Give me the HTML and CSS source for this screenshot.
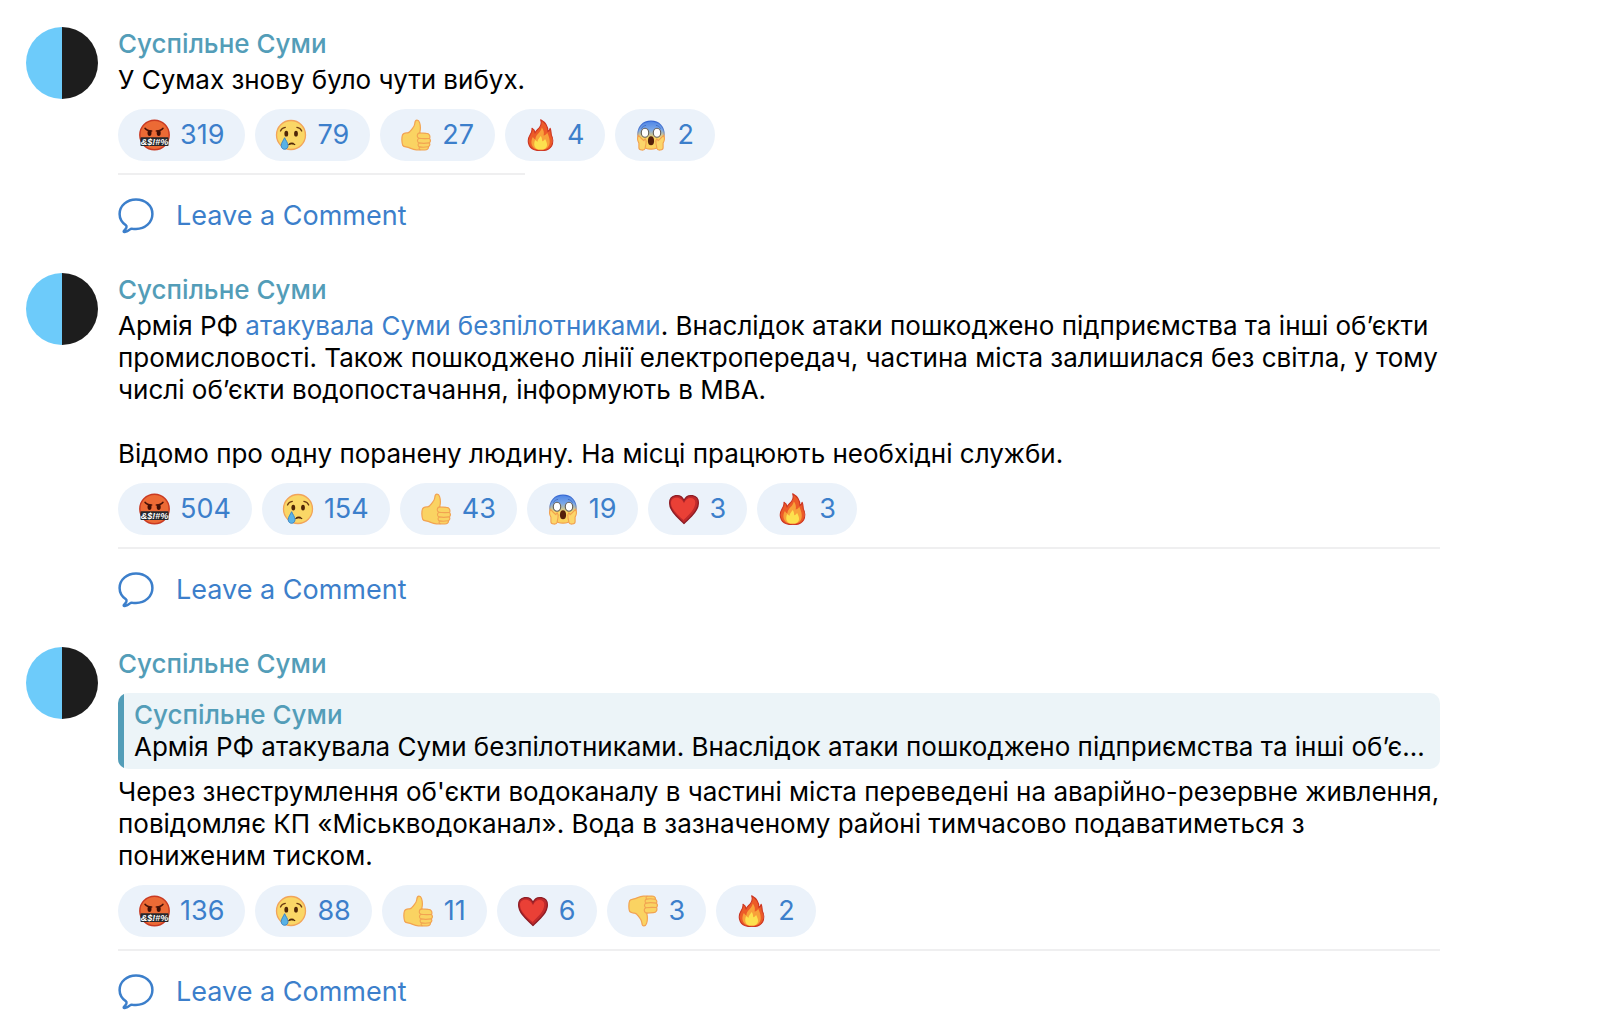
FILE: index.html
```html
<!DOCTYPE html>
<html lang="uk">
<head>
    <meta charset="UTF-8">
    <meta name="viewport" content="width=device-width, initial-scale=1.0">
    <title>Суспільне Суми</title>
    <link rel="stylesheet" href="styles.css">
</head>
<body>
    <!-- Gradients stay rendered, otherwise the fills disappear -->
    <svg class="gradients" aria-hidden="true">
        <linearGradient id="scream-face" x1="0" y1="0" x2="0" y2="1">
            <stop offset="0" stop-color="#4f86e6"/>
            <stop offset="0.3" stop-color="#7aa7e8"/>
            <stop offset="0.6" stop-color="#fbd864"/>
            <stop offset="1" stop-color="#fbd05c"/>
        </linearGradient>
        <linearGradient id="scream-edge" x1="0" y1="0" x2="0" y2="1">
            <stop offset="0" stop-color="#3568d4"/>
            <stop offset="0.35" stop-color="#5d86cf"/>
            <stop offset="0.6" stop-color="#f2a04e"/>
        </linearGradient>
    </svg>

    <!-- Shared icons -->
    <svg class="sprite" aria-hidden="true">
        <symbol id="swear" viewBox="0 0 32 32">
            <circle cx="16.5" cy="16" r="14.7" fill="#ec6a35" stroke="#c93a22" stroke-width="1.4"/>
            <ellipse cx="11.5" cy="14" rx="2" ry="3" fill="#3d0e06"/>
            <ellipse cx="20.7" cy="14" rx="2" ry="3" fill="#3d0e06"/>
            <path d="M7 9.300c1.200 1.700 3.400 2.700 6.700 2.800M25 9.300c-1.200 1.700-3.400 2.700-6.700 2.800" fill="none" stroke="#4a1308" stroke-width="1.500" stroke-linecap="round"/>
            <rect x="2.500" y="18.300" width="28" height="8.700" rx="0.800" fill="#25262a"/>
            <text x="16.500" y="25.800" text-anchor="middle" class="swear-text">&amp;$!#%</text>
        </symbol>
        <symbol id="cry" viewBox="0 0 32 32">
            <circle cx="16" cy="16" r="14.500" fill="#fad766" stroke="#f2a45a" stroke-width="1.300"/>
            <ellipse cx="11.300" cy="14.700" rx="1.900" ry="2.900" fill="#4f2608"/>
            <ellipse cx="21" cy="14.700" rx="1.900" ry="2.900" fill="#4f2608"/>
            <path d="M5.500 12c.8-2 2.600-3.300 4.800-3.600M26.700 12c-.8-2-2.600-3.300-4.800-3.600" fill="none" stroke="#6b3a12" stroke-width="1.300" stroke-linecap="round"/>
            <path d="M13.500 25.800c1-2.400 5.500-2.400 6.500 0-1.700-1.200-4.800-1.200-6.500 0z" fill="#4f2608" stroke="#4f2608" stroke-width="1"/>
            <path d="M9.600 18.700c-1.300 3-3.400 5.200-3.400 7.900 0 2.300 1.500 3.700 3.400 3.700s3.400-1.400 3.400-3.700c0-2.700-2.100-4.900-3.400-7.900z" fill="#58b2e6" stroke="#3c88c6" stroke-width="1"/>
        </symbol>
        <symbol id="thumb" viewBox="0 0 32 32">
            <path d="M17 1.200c-1.600 0-2.100 1.400-2.200 3.300-.2 3-2.100 4.300-3.600 6.600-1 1.500-1.700 2.600-3.700 2.800-2.300.2-4.200.1-5 2-.9 2.400-.9 8 .3 10.500.9 1.700 3.300 1.300 5.300 2 2.800 1 5.100 2.300 8.300 2.400l8.500.2c2.200 0 3.800-1.200 3.500-3.200 1.300-.8 1.700-2.400 1-3.900 1.100-1.200 1.200-3 .2-4.300.9-2.800-.3-5.200-3.200-5.300l-6.700-.4c.9-3.400 1-6.900-.1-10.300-.5-1.600-1.300-2.400-2.600-2.400z" fill="#fad362" stroke="#f2a351" stroke-width="1.200" stroke-linejoin="round"/>
            <path d="M20 13.900c-3.200.2-3.700 4.600-.8 5.300-2.500.9-2.200 4.200.2 4.700-2 .9-1.600 3.600.3 4-1 .8-.7 2.400.4 2.900M19.200 19.200c3 .6 6.700.5 10.200.3M19.400 23.900c3 .7 6.500.5 9.800 0M19.700 27.900c2.600.6 5.500.4 8.400-.1" fill="none" stroke="#f2a351" stroke-width="1.100" stroke-linecap="round"/>
        </symbol>
        <symbol id="fire" viewBox="0 0 32 32">
            <path d="M15.700.8c5 2.700 7.200 6.700 7.200 11.600 1.400-.7 2-1.700 2.200-3.100 1.200 2.200.8 4.500 1.300 6.900 1.700 2.800 1.800 7.500.3 10.500-2 3.800-6 5-10.900 5-5.200 0-9.700-1.500-11.500-5.200-1.600-3.400-.9-8 1-11 1.300-2.100 2-4 1.700-6.200 1.700.8 2.800 2.500 3 4.600 1-2.100 3-3.500 4.500-5.400 1.700-2.200 2.200-4.700 1.200-7.700z" fill="#ec5b28" stroke="#cc3420" stroke-width="1.100" stroke-linejoin="round"/>
            <path d="M16.800 8.500c2 2.500 2.500 5.200 1.800 8 1.800-.2 2.900-1.200 3.600-2.700 2.800 5.500 4 11.500.2 15-3.500 2.700-10.500 2.700-13.700-.1-3-2.800-2.800-7-.8-10.600.7 1.200 1.400 1.800 2.500 2.300 0-5.100 5.600-6.700 6.400-11.900z" fill="#f8a13a"/>
            <path d="M15.800 17c1 1.800 1.400 3.300 1.400 5.200 1.200-.3 2.200-1 2.900-2.200 2.300 4.200 2.800 7.500.2 9.400-2.300 1.600-7 1.600-9.200 0-2.400-1.900-2.200-5.400-.9-8.300.7.900 1.400 1.400 2.400 1.600 0-2.400 2-3.800 3.200-5.700z" fill="#fde14e"/>
        </symbol>
        <symbol id="scream" viewBox="0 0 32 32">
            <path d="M16 2.200c-8.400 0-13.200 6-13.200 13.500C2.800 24 8 30.200 16 30.200S29.200 24 29.200 15.700c0-7.500-4.800-13.500-13.200-13.500z" fill="url(#scream-face)" stroke="url(#scream-edge)" stroke-width="1.200"/>
            <path d="M6.500 9.300c.9-1.600 2.300-2.500 4.200-2.900M25.500 9.300c-.9-1.600-2.300-2.500-4.200-2.900" fill="none" stroke="#426fc5" stroke-width="1" stroke-linecap="round"/>
            <ellipse cx="10" cy="13.700" rx="3.700" ry="4.500" fill="#fff" stroke="#655f57" stroke-width="1.100"/>
            <ellipse cx="22" cy="13.700" rx="3.700" ry="4.500" fill="#fff" stroke="#655f57" stroke-width="1.100"/>
            <path d="M16 17.300c2 0 3.100 2 3.100 4.600S18 26.300 16 26.300s-3.100-1.800-3.100-4.400 1.100-4.600 3.100-4.600z" fill="#54200b"/>
            <path d="M3.500 16.400c-1.400 2.400-1.100 5.200.4 7.700v4.600c0 2.800 5.500 3.300 6.200.7.300-1.300.3-2.700.8-4 .8-2.200.4-4.200-.7-5.700-.8.300-1.200 1-1.200 2-1.800-1.300-3.200-2.700-5.500-5.300z" fill="#fcd66a" stroke="#f2a04e" stroke-width="1.100" stroke-linejoin="round"/>
            <path d="M28.500 16.400c1.400 2.400 1.100 5.200-.4 7.700v4.600c0 2.800-5.500 3.300-6.200.7-.3-1.300-.3-2.700-.8-4-.8-2.200-.4-4.200.7-5.700.8.300 1.200 1 1.200 2 1.800-1.300 3.200-2.700 5.500-5.300z" fill="#fcd66a" stroke="#f2a04e" stroke-width="1.100" stroke-linejoin="round"/>
        </symbol>
        <symbol id="heart" viewBox="0 0 32 32">
            <path d="M16 30.500C11.500 25.800 1.600 18.700 1.600 9.900c0-8.300 11.200-10.200 14.400-2.300 3.200-7.900 14.400-6 14.400 2.300 0 8.800-9.900 15.900-14.400 20.600z" fill="#c02a2b" stroke="#8d1c24" stroke-width="1.200"/>
            <path d="M15.500 27C10.500 22.500 3 16.500 3 9.700c0-6 9.500-7.700 13 .6 2.500-7.300 11.300-6.800 11.300-.8 0 7-7.300 13-11.800 17.500z" fill="#ea4036"/>
        </symbol>
        <symbol id="bubble" viewBox="0 0 36 36">
            <path d="M18 1.500C8.900 1.500 1.600 7.800 1.600 16c0 4.800 2.400 8.600 6.300 11.300.8.600.8 1.300.5 2.200-.5 1.300-1.200 2.300-2.300 3.200-.8.700-.4 1.400.6 1.300 2-.3 3.700-1.200 5.300-2.600.7-.7 1.400-.9 2.300-.7 1.200.2 2.400.3 3.700.3 9.100 0 16.400-6.500 16.400-15S27.100 1.500 18 1.500z" fill="none" stroke="#3c7fcb" stroke-width="2.500" stroke-linejoin="round"/>
        </symbol>
    </svg>

    <main class="feed">
        <article class="message">
            <div class="avatar"></div>
            <div class="content">
                <h2 class="author">Суспільне Суми</h2>
                <p class="text">У Сумах знову було чути вибух.</p>
                <div class="reactions">
                    <button class="reaction"><svg><use href="#swear"/></svg>319</button>
                    <button class="reaction"><svg><use href="#cry"/></svg>79</button>
                    <button class="reaction"><svg><use href="#thumb"/></svg>27</button>
                    <button class="reaction"><svg><use href="#fire"/></svg>4</button>
                    <button class="reaction"><svg><use href="#scream"/></svg>2</button>
                </div>
                <div class="footer">
                    <button class="comment"><svg><use href="#bubble"/></svg>Leave a Comment</button>
                </div>
            </div>
        </article>

        <article class="message">
            <div class="avatar"></div>
            <div class="content">
                <h2 class="author">Суспільне Суми</h2>
                <p class="text">Армія РФ <a href="#">атакувала Суми безпілотниками</a>. Внаслідок атаки пошкоджено підприємства та інші обʼєкти промисловості. Також пошкоджено лінії електропередач, частина міста залишилася без світла, у тому числі обʼєкти водопостачання, інформують в МВА.</p>
                <p class="text">Відомо про одну поранену людину. На місці працюють необхідні служби.</p>
                <div class="reactions">
                    <button class="reaction"><svg><use href="#swear"/></svg>504</button>
                    <button class="reaction"><svg><use href="#cry"/></svg>154</button>
                    <button class="reaction"><svg><use href="#thumb"/></svg>43</button>
                    <button class="reaction"><svg><use href="#scream"/></svg>19</button>
                    <button class="reaction"><svg><use href="#heart"/></svg>3</button>
                    <button class="reaction"><svg><use href="#fire"/></svg>3</button>
                </div>
                <div class="footer">
                    <button class="comment"><svg><use href="#bubble"/></svg>Leave a Comment</button>
                </div>
            </div>
        </article>

        <article class="message">
            <div class="avatar"></div>
            <div class="content">
                <h2 class="author">Суспільне Суми</h2>
                <blockquote class="reply">
                    <h3 class="reply-author">Суспільне Суми</h3>
                    <p class="reply-text">Армія РФ атакувала Суми безпілотниками. Внаслідок атаки пошкоджено підприємства та інші обʼє...</p>
                </blockquote>
                <p class="text">Через знеструмлення об'єкти водоканалу в частині міста переведені на аварійно-резервне живлення, повідомляє КП «Міськводоканал». Вода в зазначеному районі тимчасово подаватиметься з пониженим тиском.</p>
                <div class="reactions">
                    <button class="reaction"><svg><use href="#swear"/></svg>136</button>
                    <button class="reaction"><svg><use href="#cry"/></svg>88</button>
                    <button class="reaction"><svg><use href="#thumb"/></svg>11</button>
                    <button class="reaction"><svg><use href="#heart"/></svg>6</button>
                    <button class="reaction"><svg class="flipped"><use href="#thumb"/></svg>3</button>
                    <button class="reaction"><svg><use href="#fire"/></svg>2</button>
                </div>
                <div class="footer">
                    <button class="comment"><svg><use href="#bubble"/></svg>Leave a Comment</button>
                </div>
            </div>
        </article>
    </main>
</body>
</html>
```
FILE: styles.css
```css
* {
    box-sizing: border-box;
    margin: 0;
    padding: 0;
}

body {
    background: #fff;
    color: #000;
    font-family: Inter, "Liberation Sans", sans-serif;
    font-size: 26px;
    line-height: 32px;
}

button {
    border: none;
    background: none;
    font: inherit;
    color: #3c7fcb;
    cursor: pointer;
}

a {
    color: #3c7fcb;
    text-decoration: none;
}

.gradients {
    position: absolute;
    width: 0;
    height: 0;
}

.sprite {
    display: none;
}

.swear-text {
    font-family: "Liberation Sans", sans-serif;
    font-size: 9px;
    font-weight: bold;
    font-style: italic;
    fill: #fff;
}

.feed {
    padding: 27px 26px;
}

.message {
    display: flex;
    gap: 20px;
    margin-bottom: 37px;
}

.avatar {
    flex: none;
    width: 72px;
    height: 72px;
    border-radius: 50%;
    background: linear-gradient(to right, #6dcbfa 50%, #1d1d1d 50%);
}

.content {
    max-width: 1322px;
    min-width: 0;
}

.author,
.reply-author {
    font-size: 26px;
    font-weight: 500;
    color: #539db8;
}

.author {
    padding-top: 1px;
    margin-bottom: 4px;
}

.text + .text {
    margin-top: 32px;
}

.reply {
    margin: 13px 0 7px;
    padding: 6px 10px 6px 16px;
    border-radius: 10px;
    background: linear-gradient(to right, #539db8 6px, #ecf4f8 6px);
}

.reply-text {
    overflow: hidden;
    white-space: nowrap;
    text-overflow: ellipsis;
}

/* the row never widens the message, it may stick out past short text */
.reactions {
    display: flex;
    gap: 10px;
    width: 0;
    min-width: 100%;
    margin: 13px 0 12px;
}

.reaction {
    display: flex;
    flex: none;
    align-items: center;
    gap: 10px;
    height: 52px;
    padding: 0 21px 0 20px;
    border-radius: 26px;
    background: #ebf2fa;
    font-size: 27px;
}

.reaction svg {
    width: 32px;
    height: 32px;
}

.flipped {
    transform: scaleY(-1);
}

.footer {
    padding-top: 20px;
    border-top: 2px solid #efeff0;
}

.comment {
    display: flex;
    align-items: center;
    gap: 22px;
    height: 41px;
    font-size: 27px;
}

.comment svg {
    width: 36px;
    height: 36px;
}
```
